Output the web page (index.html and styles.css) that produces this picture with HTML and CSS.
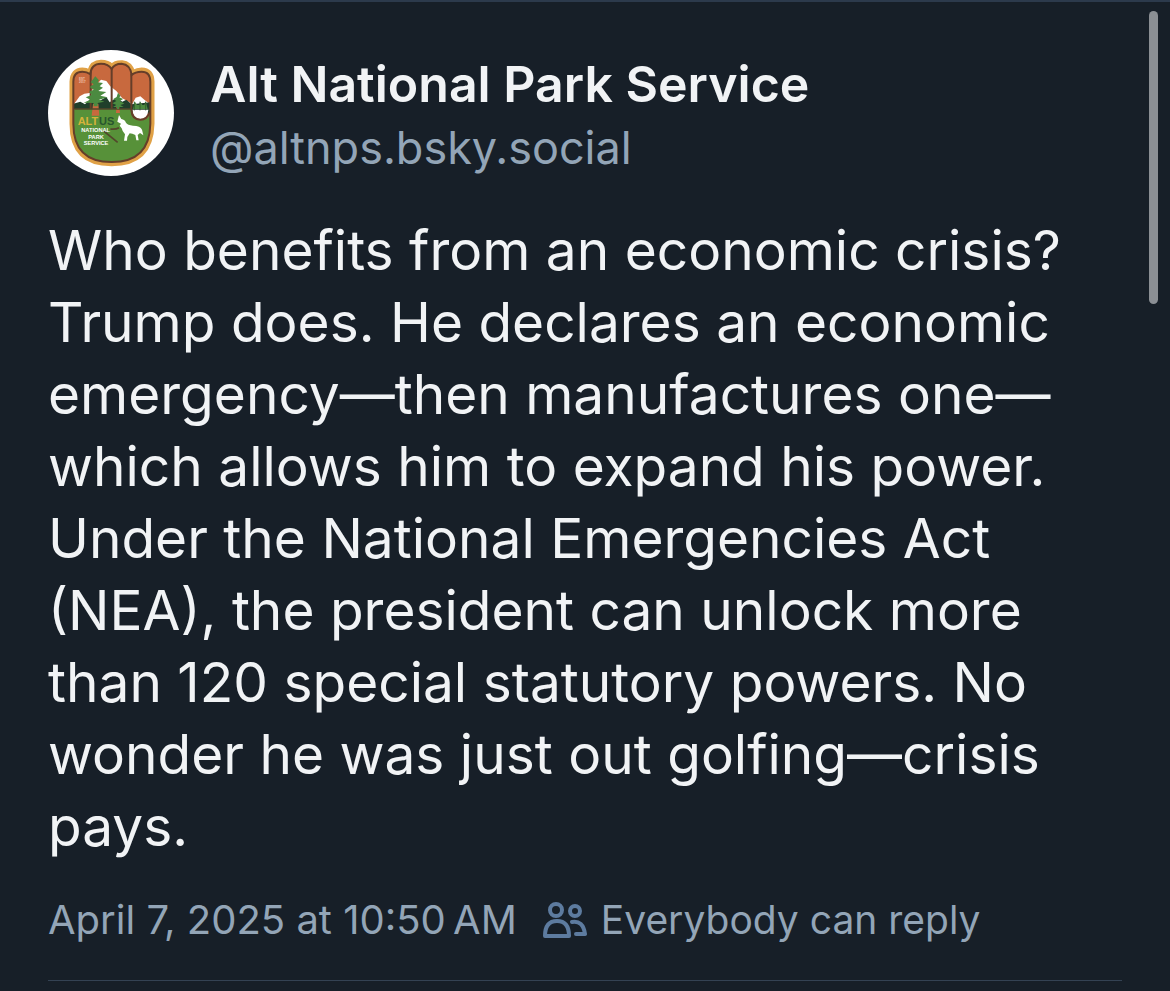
FILE: index.html
```html
<!DOCTYPE html>
<html lang="en">
<head>
  <meta charset="UTF-8" />
  <meta name="viewport" content="width=device-width, initial-scale=1.0" />
  <title>Alt National Park Service</title>
  <link rel="stylesheet" href="styles.css">
</head>
<body>
  <main class="thread">
    <article class="post">
      <header class="author">
        <svg class="avatar" viewBox="23 29 378 378" role="img" aria-label="Alt National Park Service logo">
          <defs>
            <clipPath id="badge">
              <path d="M99 124 Q99 94 126 94 Q140 94 150 102 Q152 70 182 70 Q204 70 214 86 Q222 70 244 70 Q270 72 274 104 Q284 94 304 94 Q330 94 330 124 V250 Q328 365 214 365 Q99 365 99 250 Z" />
            </clipPath>
          </defs>
          <circle cx="212" cy="218" r="189" fill="#fff" />
          <path d="M93 124 Q95 88 126 87 Q138 87 146 93 Q154 64 182 64 Q204 64 214 76 Q224 64 246 65 Q270 68 279 94 Q290 87 304 87 Q336 88 337 124 V250 Q334 372 214 372 Q93 372 93 250 Z" fill="#c8693e" stroke="#e0a146" stroke-width="11" />
          <g clip-path="url(#badge)">
            <path d="M99 194 L118 168 L132 160 L148 158 L166 136 L182 118 L198 122 L210 138 L228 152 L246 174 L276 190 L286 172 L300 168 L312 178 L332 194 V218 H99 Z" fill="#fff" />
            <path d="M99 190 L120 184 L134 192 L150 176 L166 188 L198 170 L208 186 L228 172 L246 184 L258 178 L274 192 L330 186 V220 H99 Z" fill="#203f2b" />
            <path d="M99 206 H274 Q278 240 302 240 Q320 240 330 220 V365 H99 Z" fill="#579139" />
            <path d="M276 208 H324 Q322 236 300 236 Q278 236 276 208 Z" fill="#fff" />
            <path d="M158 190 H174 L177 226 H154 Z M229 192 H236 L239 218 H227 Z" fill="#c8693e" />
            <path d="M151 94 V206 M214 84 V206 M273 100 V208 Q275 238 300 238 Q320 238 328 216" fill="none" stroke="#653e29" stroke-width="6" />
            <path d="M102 206 H272 M210 266 Q226 268 236 262 M190 272 L232 306" fill="none" stroke="#53472b" stroke-width="5" />
          </g>
          <path d="M99 124 Q99 94 126 94 Q140 94 150 102 Q152 70 182 70 Q204 70 214 86 Q222 70 244 70 Q270 72 274 104 Q284 94 304 94 Q330 94 330 124 V250 Q328 365 214 365 Q99 365 99 250 Z" fill="none" stroke="#653e29" stroke-width="6" />
          <path d="M165 108 L176 120 L172 126 L188 128 L178 138 L188 142 L174 152 L198 155 L180 166 L202 171 L176 178 L192 184 L172 188 V198 H160 V188 L130 187 L150 178 L136 171 L154 164 L146 154 L160 148 L148 140 L160 132 L151 126 Z" fill="#4b8a40" />
          <path d="M233 157 L241 167 L237 171 L248 176 L239 182 L252 190 L240 194 L250 200 H236 V206 H230 V200 H218 L228 194 L216 189 L228 182 L219 176 L229 170 Z" fill="#4b8a40" />
          <path d="M284 184 L290 194 H297 L300 184 L306 194 H312 L316 184 L322 206 H278 Z" fill="#4b8a40" />
          <path d="M282 184 V210 M299 184 V210 M316 184 V210" stroke="#315f2c" stroke-width="3" />
          <path d="M236 224 L243 236 Q254 238 256 246 Q262 256 278 256 Q300 256 305 268 L309 285 L299 278 L292 284 L295 300 H288 L285 284 Q276 279 268 279 L261 290 L260 301 H251 L254 282 Q246 274 244 264 L238 256 L242 250 L231 244 Z" fill="#fff" />
          <g font-family="Liberation Sans, sans-serif" font-weight="bold">
            <text x="112" y="255" font-size="33" fill="#d5b33b">ALT</text>
            <text x="176" y="255" font-size="33" fill="#28552e">US</text>
            <g fill="#fff" text-anchor="middle" font-size="17">
              <text x="166" y="275">NATIONAL</text>
              <text x="167" y="295">PARK</text>
              <text x="167" y="315">SERVICE</text>
            </g>
            <g fill="#f1c5b0" font-size="9">
              <text x="116" y="118">EST</text>
              <text x="116" y="127">2017</text>
            </g>
          </g>
        </svg>
        <div class="names">
          <a class="display-name" href="#">Alt National Park Service</a>
          <a class="handle" href="#">@altnps.bsky.social</a>
        </div>
      </header>

      <p class="post-text">Who benefits from an economic crisis? Trump does. He declares an economic emergency—then manufactures one—which allows him to expand his power. Under the National Emergencies Act (NEA), the president can unlock more than 120 special statutory powers. No wonder he was just out golfing—crisis pays.</p>

      <footer class="meta">
        <time datetime="2025-04-07T10:50">April 7, 2025 at 10:50&#8239;AM</time>
        <button class="reply-setting" type="button">
          <svg class="people" viewBox="0 0 44 36" aria-hidden="true">
            <circle cx="13" cy="8" r="6" />
            <circle cx="32" cy="9" r="5" />
            <path d="M2 34 Q2 19 14 19 Q26 19 26 34 Z" />
            <path d="M29 20 Q40 18 42 32 H33" />
          </svg>
          Everybody can reply
        </button>
      </footer>
    </article>
  </main>
  <div class="scroll-thumb"></div>
</body>
</html>
```

FILE: styles.css
```css
* {
  box-sizing: border-box;
}
body {
  margin: 0;
  background-color: #171f28;
  color: #f1f3f5;
  font-family: Inter, sans-serif;
}
a {
  color: inherit;
  text-decoration: none;
}
.thread {
  border-top: 2px solid #2c3a4c;
  padding: 48px 48px 0;
}
.post {
  border-bottom: 1px solid #344253;
  padding-bottom: 32px;
}
.author {
  display: flex;
  align-items: flex-start;
  gap: 36px;
}
.avatar {
  width: 126px;
  height: 126px;
  flex-shrink: 0;
}
.names {
  display: flex;
  flex-direction: column;
  padding-top: 2px;
}
.display-name {
  font-size: 50px;
  font-weight: 600;
  line-height: 64px;
}
.handle {
  color: #93a5b7;
  font-size: 45px;
  line-height: 64px;
}
.post-text {
  margin: 34px 0 30px;
  font-size: 55px;
  line-height: 72px;
}
.meta {
  display: flex;
  align-items: center;
  gap: 26px;
  color: #93a5b7;
  font-size: 40px;
  line-height: 56px;
}
.reply-setting {
  display: flex;
  align-items: center;
  gap: 14px;
  margin: 0;
  padding: 0;
  border: 0;
  background: none;
  color: inherit;
  font-family: inherit;
  font-size: 39px;
  line-height: inherit;
  cursor: pointer;
}
.people {
  width: 44px;
  height: 36px;
  fill: none;
  stroke: #5d7b9f;
  stroke-width: 4;
  stroke-linecap: round;
  stroke-linejoin: round;
}
.scroll-thumb {
  position: fixed;
  top: 11px;
  right: 12px;
  width: 9px;
  height: 293px;
  border-radius: 5px;
  background-color: #8b8f94;
}
```
